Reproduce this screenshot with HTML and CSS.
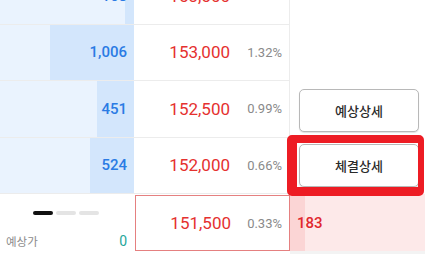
FILE: index.html
```html
<!DOCTYPE html>
<html>
<head>
	<meta charset="utf-8">
	<title>호가</title>
	<link rel="stylesheet" href="styles.css">
</head>
<body>
	<div class="screen">
		<div class="book">
			<div class="asks">
				<div class="asks-list">
					<div class="row">
						<div class="vol" style="--w:9px">168</div>
						<div class="price"><span class="won">153,500</span><span class="pct">1.65%</span></div>
					</div>
					<div class="row">
						<div class="vol" style="--w:84px">1,006</div>
						<div class="price"><span class="won">153,000</span><span class="pct">1.32%</span></div>
					</div>
					<div class="row">
						<div class="vol" style="--w:37px">451</div>
						<div class="price"><span class="won">152,500</span><span class="pct">0.99%</span></div>
					</div>
					<div class="row">
						<div class="vol" style="--w:44px">524</div>
						<div class="price"><span class="won">152,000</span><span class="pct">0.66%</span></div>
					</div>
				</div>
			</div>
			<div class="row current">
				<div class="info">
					<div class="pager"><i class="on"></i><i></i><i></i></div>
					<div class="expect"><span>예상가</span><b>0</b></div>
				</div>
				<div class="price now"><span class="won">151,500</span><span class="pct">0.33%</span></div>
			</div>
		</div>
		<div class="side">
			<div class="side-top">
				<button class="btn">예상상세</button>
				<button class="btn">체결상세</button>
			</div>
			<div class="bid" style="--w:15px">183</div>
			<div class="side-rest"></div>
		</div>
		<div class="mark"></div>
	</div>
</body>
</html>
```

FILE: styles.css
```css
* {
	box-sizing: border-box;
}
body {
	margin: 0;
	background: #fff;
	font-family: Roboto, "Noto Sans CJK KR", sans-serif;
	overflow: hidden;
}
.screen {
	position: relative;
	display: flex;
	width: 425px;
	height: 254px;
}
.book {
	width: 290px;
}
.asks {
	height: 194px;
	overflow: hidden;
}
.asks-list {
	margin-top: -32px;
}
.row {
	display: flex;
	height: 56.5px;
	border-bottom: 1px solid #ececec;
}
.vol {
	width: 134px;
	display: flex;
	align-items: center;
	justify-content: flex-end;
	padding-right: 7px;
	font-size: 15px;
	font-weight: 500;
	color: #2a7be4;
	background: linear-gradient(to left, #d3e6fc var(--w), #eaf3fe var(--w));
}
.price {
	width: 156px;
	display: grid;
	grid-template-columns: 1fr 59px;
	align-items: center;
	border-right: 1px solid #ececec;
}
.won {
	text-align: right;
	font-size: 17px;
	color: #e5312f;
}
.pct {
	text-align: right;
	padding-right: 7px;
	font-size: 13px;
	color: #8a8a8a;
}
.current {
	height: 57px;
	border-bottom: 0;
	padding-top: 1px;
}
.info {
	width: 134px;
	padding: 16px 7px 0 6px;
}
.pager {
	display: flex;
	gap: 3px;
	padding-left: 27px;
}
.pager i {
	width: 20px;
	height: 4px;
	border-radius: 2px;
	background: #e4e4e4;
}
.pager i.on {
	background: #111;
}
.expect {
	display: flex;
	justify-content: space-between;
	align-items: center;
	margin-top: 18px;
}
.expect span {
	font-size: 11.5px;
	color: #8c8c8c;
}
.expect b {
	font-weight: 400;
	font-size: 14px;
	color: #26a69a;
}
.now {
	border: 1px solid #e58080;
	margin-left: 1px;
	width: 155px;
	grid-template-columns: 1fr 58px;
}
.side {
	width: 135px;
	display: flex;
	flex-direction: column;
}
.side-top {
	height: 194px;
	padding: 89px 0 0 9px;
	display: flex;
	flex-direction: column;
	gap: 12px;
}
.btn {
	width: 120px;
	height: 43px;
	background: #fff;
	border: 1.5px solid #b8b8b8;
	border-radius: 5px;
	box-shadow: 0 1px 1px rgba(0, 0, 0, .12);
	font-family: "Noto Sans CJK KR", sans-serif;
	font-size: 13px;
	font-weight: 500;
	color: #2a2a2a;
}
.bid {
	height: 57px;
	display: flex;
	align-items: center;
	padding-left: 7px;
	font-size: 15px;
	font-weight: 500;
	color: #e0282e;
	background: linear-gradient(to right, #fbd5d5 var(--w), #fde9e9 var(--w));
}
.side-rest {
	flex: 1;
	background: #f3f3f3;
}
.mark {
	position: absolute;
	left: 287px;
	top: 135px;
	width: 137px;
	height: 61px;
	border-style: solid;
	border-color: #ed1c24;
	border-width: 8px 6px 9px 10px;
	border-radius: 5px;
}
```
